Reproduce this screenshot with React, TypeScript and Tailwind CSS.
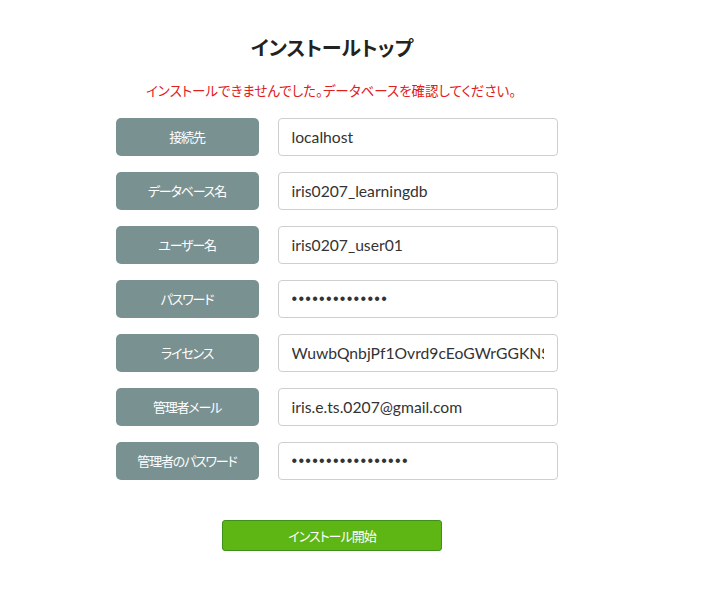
import React from "react";

const rows: { label: string; value: string; pw?: boolean }[] = [
  { label: "接続先", value: "localhost" },
  { label: "データベース名", value: "iris0207_learningdb" },
  { label: "ユーザー名", value: "iris0207_user01" },
  { label: "パスワード", value: "•".repeat(14), pw: true },
  { label: "ライセンス", value: "WuwbQnbjPf1Ovrd9cEoGWrGGKNSvXyZ" },
  { label: "管理者メール", value: "iris.e.ts.0207@gmail.com" },
  { label: "管理者のパスワード", value: "•".repeat(17), pw: true },
];

export default function App() {
  return (
    <div className="w-[721px] h-[592px] bg-white font-['Lato','Noto_Sans_CJK_JP',sans-serif] [font-feature-settings:'palt']">
      <div className="w-[662px] flex flex-col items-center pt-[34px]">
        <h1 className="text-[20px] font-bold text-[#222] leading-[28px] ml-[2px] font-['Noto_Sans_CJK_JP',sans-serif]">
          インストールトップ
        </h1>
        <p className="mt-[19px] text-[13.5px] leading-[18px] text-[#e0201c] font-['Noto_Sans_CJK_JP',sans-serif]">
          インストールできませんでした。データベースを確認してください。
        </p>
        <div className="mt-[19px] ml-[11px] flex flex-col gap-[16px]">
          {rows.map((r) => (
            <div key={r.label} className="flex gap-[19px]">
              <div className="w-[143px] h-[38px] rounded-[5px] bg-[#7a9191] text-white text-[13px] tracking-[-1.2px] flex items-center justify-center font-['Noto_Sans_CJK_JP',sans-serif]">
                {r.label}
              </div>
              <input
                readOnly
                type="text"
                value={r.value}
                className={
                  r.pw
                    ? "w-[280px] h-[38px] rounded-[4px] border border-[#cfcfcf] px-[13px] text-[16px] tracking-[1.3px] text-[#333] outline-none font-['Liberation_Sans',sans-serif]"
                    : "w-[280px] h-[38px] rounded-[4px] border border-[#cfcfcf] px-[13px] text-[15.7px] text-[#333] outline-none"
                }
              />
            </div>
          ))}
        </div>
        <button className="mt-[40px] ml-[2px] w-[220px] h-[31px] rounded-[3px] bg-[#5db614] border border-[#3f8f1c] text-white text-[13px] tracking-[-1px] font-['Noto_Sans_CJK_JP',sans-serif]">
          インストール開始
        </button>
      </div>
    </div>
  );
}
